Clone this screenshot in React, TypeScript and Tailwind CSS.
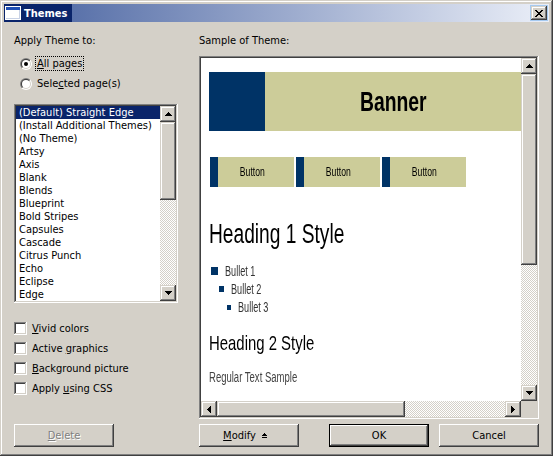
import React from "react";

const UI = "[font-family:'DejaVu_Sans_Condensed','Liberation_Sans',sans-serif]";
const RAISED = "shadow-[inset_-1px_-1px_#404040,inset_1px_1px_#fff,inset_-2px_-2px_#808080,inset_2px_2px_#d4d0c8]";
const SCROLLBTN = "shadow-[inset_-1px_-1px_#404040,inset_1px_1px_#d4d0c8,inset_-2px_-2px_#808080,inset_2px_2px_#fff]";
const SUNKEN = "shadow-[inset_-1px_-1px_#fff,inset_1px_1px_#808080,inset_-2px_-2px_#d4d0c8,inset_2px_2px_#404040]";
const CHECKER = "bg-[conic-gradient(#fff_25%,#d4d0c8_0_50%,#fff_0_75%,#d4d0c8_0)] bg-[length:2px_2px]";

function Pix({ rows, color = "#000" }: { rows: string[]; color?: string }) {
  const w = rows[0].length;
  const h = rows.length;
  return (
    <svg width={w} height={h} viewBox={`0 0 ${w} ${h}`} shapeRendering="crispEdges" className="block">
      {rows.flatMap((r, y) =>
        r.split("").map((c, x) =>
          c === "x" ? <rect key={`${x}-${y}`} x={x} y={y} width={1} height={1} fill={color} /> : null
        )
      )}
    </svg>
  );
}

const ARROWS: Record<string, string[]> = {
  up: ["...x...", "..xxx..", ".xxxxx.", "xxxxxxx"],
  down: ["xxxxxxx", ".xxxxx.", "..xxx..", "...x..."],
  left: ["...x", "..xx", ".xxx", "xxxx", ".xxx", "..xx", "...x"],
  right: ["x...", "xx..", "xxx.", "xxxx", "xxx.", "xx..", "x..."],
};

function ArrowBtn({ dir }: { dir: "up" | "down" | "left" | "right" }) {
  return (
    <div className={`w-4 h-4 shrink-0 bg-[#d4d0c8] ${SCROLLBTN} flex items-center justify-center`}>
      <Pix rows={ARROWS[dir]} />
    </div>
  );
}

function Radio({ checked }: { checked?: boolean }) {
  return (
    <svg width="12" height="12" viewBox="0 0 12 12" className="block shrink-0">
      <defs>
        <linearGradient id="rOuter" x1="0" y1="0" x2="1" y2="1">
          <stop offset="0.5" stopColor="#808080" />
          <stop offset="0.5" stopColor="#ffffff" />
        </linearGradient>
        <linearGradient id="rInner" x1="0" y1="0" x2="1" y2="1">
          <stop offset="0.5" stopColor="#404040" />
          <stop offset="0.5" stopColor="#d4d0c8" />
        </linearGradient>
      </defs>
      <circle cx="6" cy="6" r="6" fill="url(#rOuter)" />
      <circle cx="6" cy="6" r="5" fill="url(#rInner)" />
      <circle cx="6" cy="6" r="4" fill="#fff" />
      {checked && <circle cx="6" cy="6" r="2" fill="#000" />}
    </svg>
  );
}

function Check({ label }: { label: React.ReactNode }) {
  return (
    <div className="flex items-start h-[13px]">
      <div className={`w-[13px] h-[13px] shrink-0 bg-white ${SUNKEN}`} />
      <span className="ml-[5px] whitespace-nowrap">{label}</span>
    </div>
  );
}

const THEMES = [
  "(Default) Straight Edge",
  "(Install Additional Themes)",
  "(No Theme)",
  "Artsy",
  "Axis",
  "Blank",
  "Blends",
  "Blueprint",
  "Bold Stripes",
  "Capsules",
  "Cascade",
  "Citrus Punch",
  "Echo",
  "Eclipse",
  "Edge",
];

function PushButton({ children, className = "" }: { children: React.ReactNode; className?: string }) {
  return (
    <div className={`w-[100px] h-[23px] bg-[#d4d0c8] ${RAISED} flex items-center justify-center ${className}`}>
      {children}
    </div>
  );
}

export default function App() {
  return (
    <div
      className={`w-[553px] h-[456px] bg-[#d4d0c8] p-[4px] flex flex-col shadow-[inset_-1px_-1px_#404040,inset_1px_1px_#d4d0c8,inset_-2px_-2px_#808080,inset_2px_2px_#fff] ${UI} text-[11px] leading-[13px] text-black`}
    >
      {/* Title bar */}
      <div className="h-[18px] flex shrink-0">
        <div className="w-[68px] bg-[#0a246a] flex items-center">
          <svg width="16" height="14" viewBox="0 0 16 14" className="block ml-px" shapeRendering="crispEdges">
            <rect x="0" y="0" width="16" height="14" fill="#ffffff" />
            <rect x="1" y="1" width="14" height="3" fill="#1f4fb4" />
            <rect x="1" y="4" width="14" height="9" fill="#ffffff" />
            <rect x="1" y="12" width="14" height="1" fill="#c8d2e6" />
            <rect x="14" y="4" width="1" height="9" fill="#c8d2e6" />
          </svg>
          <span className="ml-[3px] font-bold text-white whitespace-nowrap">Themes</span>
        </div>
        <div className="flex-1 bg-[linear-gradient(to_right,#5a72aa,#ebeff8)] flex items-center justify-end pr-[2px]">
          <div
            className={`w-4 h-[14px] bg-[#d4d0c8] ${SCROLLBTN} flex items-center justify-center outline-1 outline-solid outline-[#a6caf0]`}
          >
            <Pix
              rows={["xx....xx", ".xx..xx.", "..xxxx..", "...xx...", "..xxxx..", ".xx..xx.", "xx....xx"]}
            />
          </div>
        </div>
      </div>

      {/* Body */}
      <div className="flex-1 flex gap-[21px] px-[10px] pt-[12px] pb-[5px]">
        {/* Left column */}
        <div className="w-[164px] flex flex-col">
          <div className="h-[13px] whitespace-nowrap">Apply Theme to:</div>
          <div className="mt-[10px] flex flex-col gap-[7px] pl-[6px]">
            <div className="flex items-center h-[13px]">
              <Radio checked />
              <span className="ml-[4px] px-px outline-1 outline-dotted outline-black whitespace-nowrap">
                <u>A</u>ll pages
              </span>
            </div>
            <div className="flex items-center h-[13px]">
              <Radio />
              <span className="ml-[4px] px-px whitespace-nowrap">
                Sele<u>c</u>ted page(s)
              </span>
            </div>
          </div>

          <div className={`mt-[14px] h-[199px] bg-white p-[2px] flex ${SUNKEN}`}>
            <div className="flex-1 overflow-hidden flex flex-col">
              {THEMES.map((t, i) => (
                <div
                  key={t}
                  className={`h-[13px] shrink-0 pl-[3px] whitespace-nowrap ${
                    i === 0 ? "bg-[#0a246a] text-white" : ""
                  }`}
                >
                  {t}
                </div>
              ))}
            </div>
            <div className="w-4 flex flex-col">
              <ArrowBtn dir="up" />
              <div className={`h-[78px] bg-[#d4d0c8] ${SCROLLBTN}`} />
              <div className={`flex-1 ${CHECKER}`} />
              <ArrowBtn dir="down" />
            </div>
          </div>

          <div className="mt-[19px] flex flex-col gap-[7px]">
            <Check label={<><u>V</u>ivid colors</>} />
            <Check label={<>Active <u>g</u>raphics</>} />
            <Check label={<><u>B</u>ackground picture</>} />
            <Check label={<>Apply <u>u</u>sing CSS</>} />
          </div>

          <PushButton className="mt-auto text-[#808080] [text-shadow:1px_1px_#fff]">
            <span>
              <u>D</u>elete
            </span>
          </PushButton>
        </div>

        {/* Right column */}
        <div className="w-[340px] flex flex-col">
          <div className="h-[13px] whitespace-nowrap">Sample of Theme:</div>
          <div className={`mt-[9px] h-[363px] bg-white p-[2px] ${SUNKEN}`}>
            <div className="grid grid-cols-[320px_16px] grid-rows-[343px_16px] h-full">
              {/* Preview content */}
              <div className="overflow-hidden pl-[8px] pt-[14px] [font-family:'Liberation_Sans',Arial,sans-serif]">
                <div className="w-[312px] h-[59px] flex">
                  <div className="w-[56px] bg-[#003366]" />
                  <div className="flex-1 bg-[#cccc99] flex items-center justify-center">
                    <span className="inline-block font-bold text-[28px] leading-[31px] text-black [transform:scaleX(0.69)]">
                      Banner
                    </span>
                  </div>
                </div>

                <div className="mt-[26px] ml-px flex gap-[2px]">
                  {[0, 1, 2].map((i) => (
                    <div
                      key={i}
                      className="w-[84px] h-[30px] bg-[#cccc99] border-l-[8px] border-[#003366] pr-[8px] flex items-center justify-center"
                    >
                      <span className="inline-block text-[12px] leading-[14px] text-black [transform:scaleX(0.72)]">
                        Button
                      </span>
                    </div>
                  ))}
                </div>

                <div className="mt-[31px] h-[32px] text-[27px] leading-[32px] text-black whitespace-nowrap origin-left [transform:scaleX(0.71)]">
                  Heading 1 Style
                </div>

                <div className="mt-[12px] flex flex-col text-[14px] leading-[18px] text-[#333333]">
                  <div className="h-[18px] flex items-center pl-[2px]">
                    <div className="w-[7px] h-[8px] bg-[#003366] shrink-0" />
                    <span className="ml-[7px] inline-block whitespace-nowrap origin-left [transform:scaleX(0.65)]">
                      Bullet 1
                    </span>
                  </div>
                  <div className="h-[18px] flex items-center pl-[10px]">
                    <div className="w-[5px] h-[6px] bg-[#003366] shrink-0" />
                    <span className="ml-[7px] inline-block whitespace-nowrap origin-left [transform:scaleX(0.65)]">
                      Bullet 2
                    </span>
                  </div>
                  <div className="h-[18px] flex items-center pl-[18px]">
                    <div className="w-[4px] h-[5px] bg-[#003366] shrink-0" />
                    <span className="ml-[7px] inline-block whitespace-nowrap origin-left [transform:scaleX(0.65)]">
                      Bullet 3
                    </span>
                  </div>
                </div>

                <div className="mt-[14px] h-[26px] text-[21px] leading-[26px] text-black whitespace-nowrap origin-left [transform:scaleX(0.71)]">
                  Heading 2 Style
                </div>

                <div className="mt-[12px] h-[18px] text-[14px] leading-[18px] text-[#444444] whitespace-nowrap origin-left [transform:scaleX(0.68)]">
                  Regular Text Sample
                </div>
              </div>

              {/* Vertical scrollbar */}
              <div className="flex flex-col">
                <ArrowBtn dir="up" />
                <div className={`h-[191px] bg-[#d4d0c8] ${SCROLLBTN}`} />
                <div className={`flex-1 ${CHECKER}`} />
                <ArrowBtn dir="down" />
              </div>

              {/* Horizontal scrollbar */}
              <div className="flex">
                <ArrowBtn dir="left" />
                <div className={`w-[188px] bg-[#d4d0c8] ${SCROLLBTN}`} />
                <div className={`flex-1 ${CHECKER}`} />
                <ArrowBtn dir="right" />
              </div>

              <div className="bg-[#d4d0c8]" />
            </div>
          </div>

          <div className="mt-[5px] flex">
            <PushButton>
              <div className="flex items-center gap-[6px] pr-[8px]">
                <span>
                  <u>M</u>odify
                </span>
                <Pix rows={["..x..", ".xxx.", "xxxxx", ".....", "xxxxx"]} />
              </div>
            </PushButton>
            <div className="ml-auto w-[100px] h-[23px] border border-black">
              <div className={`w-full h-full bg-[#d4d0c8] ${RAISED} flex items-center justify-center`}>OK</div>
            </div>
            <PushButton className="ml-[10px]">Cancel</PushButton>
          </div>
        </div>
      </div>
    </div>
  );
}
